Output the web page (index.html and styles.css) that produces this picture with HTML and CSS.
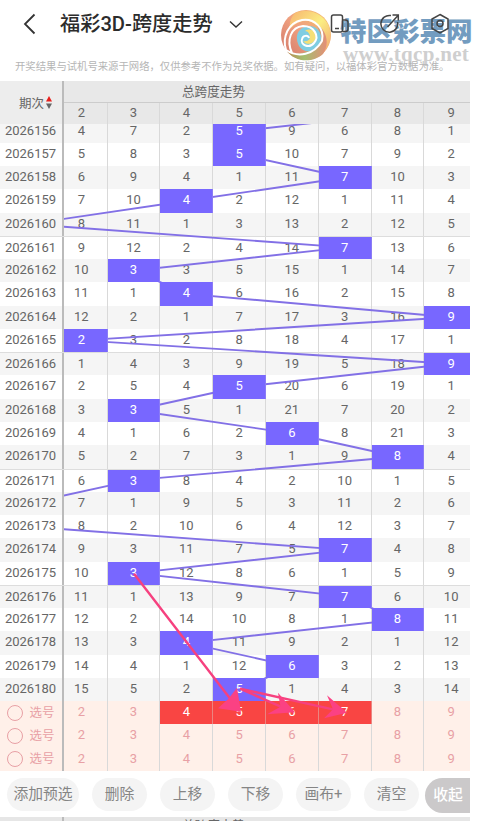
FILE: index.html
```html
<!DOCTYPE html>
<html lang="zh-CN">
<head>
<meta charset="utf-8">
<title>福彩3D-跨度走势</title>
<link rel="stylesheet" href="styles.css">
</head>
<body>
<div class="page">
  <header class="topbar">
    <svg class="back" width="14" height="22" viewBox="0 0 14 22"><path d="M11.500 1.500 2 11l9.500 9.500"/></svg>
    <h1 class="title">福彩3D-跨度走势</h1>
    <svg class="chevron" width="14" height="9" viewBox="0 0 14 9"><path d="M1 1.500 7 7l6-5.500"/></svg>
    <div class="tools">
      <svg width="20" height="22" viewBox="0 0 20 22"><rect x="1.500" y="2" width="11" height="17" rx="2"/><path d="M5 15.500h4M12.500 7h3a2.500 2.500 0 0 1 2.500 2.500V16a2.500 2.500 0 0 1-2.500 2.500h-3"/></svg>
      <svg width="20" height="22" viewBox="0 0 20 22"><path d="M11 2.600A8.400 8.400 0 1 0 17.500 9M7.500 14 18 2.500M12.500 2H18.300V7.500"/></svg>
      <svg width="20" height="22" viewBox="0 0 20 22"><path d="M10 1.500 18 6v9.500l-8 4.500-8-4.500V6z"/><circle cx="10" cy="10.500" r="3"/></svg>
    </div>
    <div class="mark">
      <svg class="mark-logo" width="52" height="52" viewBox="0 0 52 52">
        <defs>
          <linearGradient id="warm" x1="0" y1="1" x2="1" y2="0"><stop offset="0" stop-color="#cf7468"/><stop offset=".5" stop-color="#efa07f"/><stop offset="1" stop-color="#f6c26c"/></linearGradient>
          <linearGradient id="sun" x1="0" y1="0" x2="1" y2="1"><stop offset="0" stop-color="#f7b470"/><stop offset=".5" stop-color="#fbee82"/><stop offset="1" stop-color="#f0a070"/></linearGradient>
          <linearGradient id="leaf" x1="0" y1="0" x2="1" y2="0"><stop offset="0" stop-color="#b98a50"/><stop offset=".45" stop-color="#a4bf70"/><stop offset="1" stop-color="#e58e78"/></linearGradient>
        </defs>
        <circle cx="26" cy="26" r="25" fill="url(#warm)"/>
        <path d="M15 4C30-2 47 6 50 21c2 10-2 19-9 25 4-12 3-22-4-29C30 9 19 10 10 20 9 14 11 8 15 4z" fill="url(#sun)"/>
        <path d="M6 41c12 7 25 3 31-8 4-8 2-14-2-19 12 7 15 20 8 31-10 9-28 9-37-4z" fill="url(#leaf)"/>
        <path d="M20 21c8-8 21-3 21 8 0 13-16 18-22 8-3-6-3-12 1-16z" fill="#7fcde2"/>
        <path d="M25 22c6-4 13 1 11 7-2 6-9 8-13 3 4 1 7-1 7-4s-2-6-5-6z" fill="#f5df76"/>
        <path d="M6 41C2 28 8 14 22 11c12-2 23 8 20 21M12 44C6 31 11 18 23 17c11 0 17 10 11 17-5 6-14 2-12-4 1-4 6-4 7-1M6 41c12 8 28 5 36-9" fill="none" stroke="#fff" stroke-width="2"/>
      </svg>
      <div class="mark-text">
        <div class="mark-name">特区彩票网</div>
        <div class="mark-url">www.tqcp.net</div>
      </div>
    </div>
  </header>
  <p class="notice">开奖结果与试机号来源于网络，仅供参考不作为兑奖依据。如有疑问，以福体彩官方数据为准。</p>

  <section class="chart">
    <div class="head">
      <div class="head-issue">期次<svg width="6" height="13" viewBox="0 0 6 13"><path d="M3 0 6 5.500H0z" fill="#e8201c"/><path d="M3 13 6 7.500H0z" fill="#666"/></svg></div>
      <div class="head-main">
        <div class="head-title">总跨度走势</div>
        <div class="head-cols" id="cols"></div>
      </div>
    </div>
    <div class="view">
      <div class="rows" id="rows"></div>
      <svg class="trend" id="trend" width="406" height="652" viewBox="64 119.300 406 652"></svg>
      <svg class="arrows" width="406" height="652" viewBox="64 119.300 406 652">
        <path class="shaft" d="M134 574 231 700M240 689l43 19M240 689l94 21"/>
        <path class="tip" d="M241 712 218 708.500 228.500 699 237 688zM295 712.500 267 714.500 280.500 707 278 693zM347 713 324 718.500 333 709.500 327 695.500z"/>
      </svg>
    </div>
  </section>

  <nav class="actions">
    <button class="wide">添加预选</button><button>删除</button><button>上移</button><button>下移</button><button>画布+</button><button>清空</button><button class="fold">收起</button>
  </nav>
  <div class="next"><div class="next-side"></div><div class="next-title">总跨度走势</div></div>
</div>
<script src="chart.js"></script>
</body>
</html>
```
FILE: styles.css
```css
* { box-sizing: border-box; }
body {
  margin: 0;
  background: #fff;
  color: #666;
  font-family: Roboto, "Noto Sans CJK SC", sans-serif;
}
.page { width: 482px; height: 821px; overflow: hidden; display: flex; flex-direction: column; }

.topbar { position: relative; height: 54px; flex: none; display: flex; align-items: center; padding: 0 32px 6px 23px; }
.topbar svg { flex: none; }
.back, .chevron, .tools svg { fill: none; stroke: #333; stroke-width: 1.8; }
.chevron { stroke-width: 1.4; margin-left: 17px; }
.title { margin: 0 0 0 23px; width: 152px; font-size: 20.200px; line-height: 28px; font-weight: 500; color: #2c2c2c; white-space: nowrap; }
.tools { display: flex; gap: 30px; margin-left: auto; position: relative; z-index: 2; }
.tools svg { stroke: #444; stroke-width: 1.5; }
.mark { position: absolute; left: 280px; top: 9px; display: flex; }
.mark-text { margin-left: 8px; width: 132px; }
.mark-name { margin-top: 4px; font: 900 26.500px/34px "Noto Sans CJK SC", sans-serif; color: #739cc0; white-space: nowrap; }
.mark-url { margin: -4px 0 0 3px; font: bold 21px/22px "Liberation Serif", serif; letter-spacing: .3px; color: #cfcfcf; white-space: nowrap; }

.notice { position: relative; margin: 5px 0 0 15px; height: 22px; flex: none; font-size: 10.350px; line-height: 16px; color: #b5b5b5; white-space: nowrap; }

.chart { width: 470px; flex: none; }
.head { display: flex; height: 43px; background: #e8e8e8; }
.head-issue { width: 64px; flex: none; display: flex; align-items: center; gap: 2px; padding-left: 19px; background: #ededed; border-right: 2px solid #bbb; font-size: 12.500px; }
.head-main { flex: 1; }
.head-title { height: 21.500px; line-height: 21px; padding-left: 118px; font-size: 12.600px; border-bottom: 1px solid #ccc; }
.head-cols, .row { display: grid; font-size: 13px; text-align: center; }
.head-cols { grid-template-columns: 43.600px repeat(6, 52.800px) 45.600px; height: 21.500px; line-height: 20px; }
.head-cols span, .cell { border-right: 1px solid #d9d9d9; }
.head-cols span:first-child, .cell:nth-child(2) { padding-right: 8px; }
.head-cols span:last-child, .cell:last-child { padding-left: 8px; border-right: 0; }

.view { position: relative; height: 647px; margin-bottom: .5px; overflow: hidden; display: flex; flex-direction: column; justify-content: flex-end; }
.rows { flex: none; }
.row { grid-template-columns: 64px 43.600px repeat(6, 52.800px) 45.600px; height: 23.270px; line-height: 22px; background: #fff; }
.row:nth-child(odd) { background: #f5f5f5; }
.row.group { border-top: 1px solid #ddd; line-height: 21px; }
.issue { border-right: 2px solid #bbb; padding-right: 1px; }
.cell.hit { position: relative; z-index: 2; background: #7867ff; border-right-color: #8b7cf5; color: #fff; }
.row.pick { background: #fff0e9; color: #e8a0a5; }
.pick .issue { display: flex; align-items: center; justify-content: center; gap: 6px; padding: 0 0 0 0; font-size: 12.500px; }
.ring { width: 16px; height: 16px; border: 1.200px solid #e8a0a5; border-radius: 50%; }
.cell.chosen { background: #f94543; border-right-color: #eb8580; color: #fff; }
.trend, .arrows { position: absolute; left: 64px; bottom: 0; }
.trend { z-index: 1; stroke: #8270e6; stroke-width: 1.900; fill: none; }
.arrows { z-index: 3; }
.shaft { fill: none; stroke: #f6417f; stroke-width: 2.400; }
.tip { fill: #fb4183; }

.actions { display: flex; align-items: flex-start; width: 470px; height: 45px; flex: none; padding: 6px 0 0 7px; gap: 13px; }
.actions button { width: 55px; height: 33px; flex: none; padding: 0 0 1px; border: 0; border-radius: 17px; background: #f4f4f4; color: #858585; font: 14.800px/32px Roboto, "Noto Sans CJK SC", sans-serif; white-space: nowrap; }
.actions .wide { width: 72px; }
.actions .fold { width: 45px; height: 35px; margin-left: -7px; padding-left: 1px; border-radius: 18px 0 0 18px; background: #cbc9ca; color: #fff; font-weight: 500; }
.next { display: flex; width: 470px; height: 5px; overflow: hidden; background: #e6e6e6; flex: none; }
.next-side { width: 64px; border-right: 2px solid #bbb; }
.next-title { padding-left: 118px; font-size: 12.600px; line-height: 18px; }
```
FILE: chart.js
```js
// Each entry: the spans' miss counts for columns 2-9, then the drawn span.
const first = 2026156;
const data = [
  ["4 7 2 5 9 6 8 1", 5], ["5 8 3 5 10 7 9 2", 5], ["6 9 4 1 11 7 10 3", 7],
  ["7 10 4 2 12 1 11 4", 4], ["8 11 1 3 13 2 12 5", 1], ["9 12 2 4 14 7 13 6", 7],
  ["10 3 3 5 15 1 14 7", 3], ["11 1 4 6 16 2 15 8", 4], ["12 2 1 7 17 3 16 9", 9],
  ["2 3 2 8 18 4 17 1", 2], ["1 4 3 9 19 5 18 9", 9], ["2 5 4 5 20 6 19 1", 5],
  ["3 3 5 1 21 7 20 2", 3], ["4 1 6 2 6 8 21 3", 6], ["5 2 7 3 1 9 8 4", 8],
  ["6 3 8 4 2 10 1 5", 3], ["7 1 9 5 3 11 2 6", 1], ["8 2 10 6 4 12 3 7", 1],
  ["9 3 11 7 5 7 4 8", 7], ["10 3 12 8 6 1 5 9", 3], ["11 1 13 9 7 7 6 10", 7],
  ["12 2 14 10 8 1 8 11", 8], ["13 3 4 11 9 2 1 12", 4], ["14 4 1 12 6 3 2 13", 6],
  ["15 5 2 5 1 4 3 14", 5]
];
const labels = [2, 3, 4, 5, 6, 7, 8, 9];
const rowHeight = 23.27;

document.getElementById("cols").innerHTML = labels.map(n => `<span>${n}</span>`).join("");

const rows = data.map(([text, hit], i) => {
  const cells = text.split(" ").map((v, c) =>
    `<div class="cell${c + 2 === hit ? " hit" : ""}">${v}</div>`).join("");
  return `<div class="row${i % 5 === 0 && i ? " group" : ""}"><div class="issue">${first + i}</div>${cells}</div>`;
});
for (let p = 0; p < 3; p++) {
  const cells = labels.map(n =>
    `<div class="cell${p === 0 && n >= 4 && n <= 7 ? " chosen" : ""}">${n}</div>`).join("");
  rows.push(`<div class="row pick"><div class="issue"><i class="ring"></i>选号</div>${cells}</div>`);
}
document.getElementById("rows").innerHTML = rows.join("");

// The line starts at the period above the visible range.
const spans = [9, ...data.map(d => d[1])];
const points = spans.map((n, i) =>
  `${(81.3 + (n - 2) * 52.8).toFixed(1)},${(131.3 + (i - 1) * rowHeight).toFixed(1)}`);
document.getElementById("trend").innerHTML = `<polyline points="${points.join(" ")}"/>`;
```
